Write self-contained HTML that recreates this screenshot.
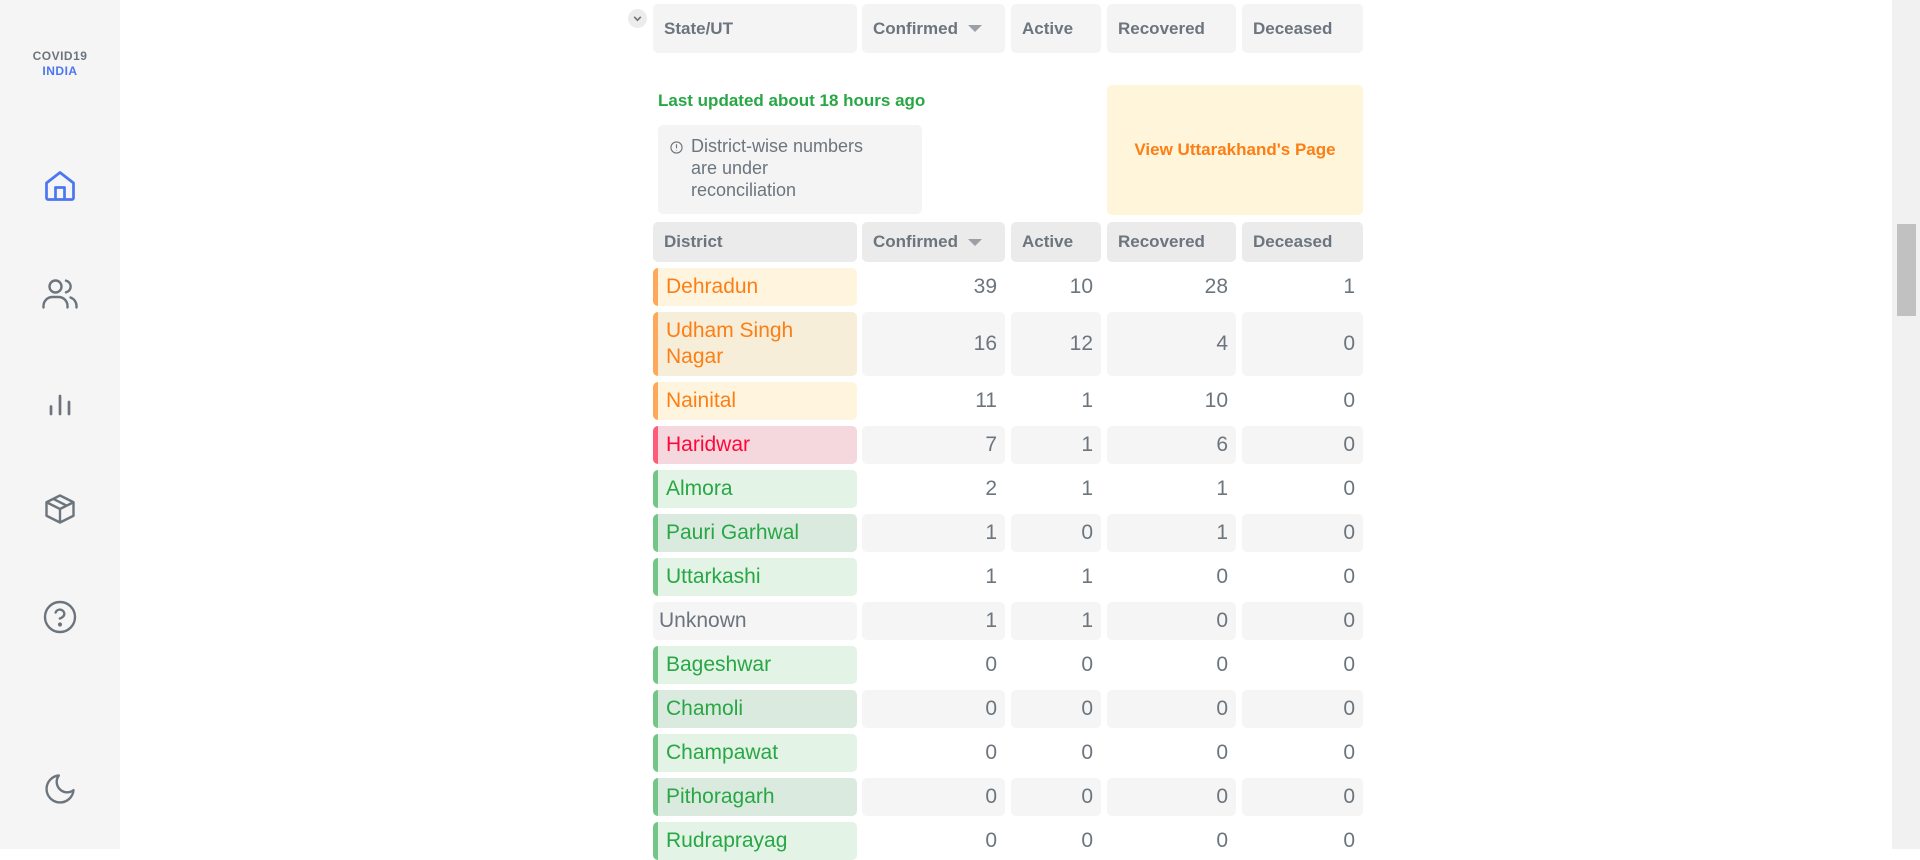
<!DOCTYPE html>
<html><head><meta charset="utf-8"><style>
*{box-sizing:border-box;margin:0;padding:0}
body{width:1920px;height:849px;overflow:hidden;background:#fff;font-family:"Liberation Sans",sans-serif;position:relative}
.side{position:absolute;left:0;top:0;width:120px;height:849px;background:#f5f5f5}
.logo{position:absolute;top:49px;width:120px;text-align:center;font-size:12px;font-weight:bold;letter-spacing:.5px;line-height:15px;color:#6c757d}
.logo span{color:#4c75f2}
.ic{position:absolute;left:42px;width:36px;height:36px}
.c{position:absolute;border-radius:5px;font-size:20px;color:#6c757d;display:flex;align-items:center}
.h{background:#f4f4f4;font-weight:bold;font-size:17px;padding-left:11px}
.dh{background:#ebebeb}
.n{justify-content:flex-end;padding-right:8px;font-size:21px}
.g{background:#f5f5f5}
.d{padding-left:13px;font-size:21px}
.d:before{content:"";position:absolute;left:0;top:0;bottom:0;width:5px;border-radius:5px 0 0 5px}
.o{color:#fd7e14;background:#fff5df}.o:before{background:#fda85a}
.o2{background:#f7eed9}
.r{color:#ff073a;background:#f5d7de}.r:before{background:#ff5c7c}
.gr{color:#28a745;background:#e3f3e6}.gr:before{background:#73c687}
.gr2{background:#dbeadf}
.tri{display:inline-block;width:0;height:0;border-left:7px solid transparent;border-right:7px solid transparent;border-top:7px solid #9aa0a6;margin-left:10px}
</style></head><body>
<div class="side">
<div class="logo">COVID19<br><span>INDIA</span></div>
<svg class="ic" style="top:168px" viewBox="0 0 24 24" fill="none" stroke="#4c75f2" stroke-width="1.8" stroke-linejoin="round"><path d="M3 10L12 3l9 7v10a1 1 0 0 1-1 1H4a1 1 0 0 1-1-1z"/><path d="M9 21v-8h6v8"/></svg>
<svg class="ic" style="top:276px" viewBox="0 0 24 24" fill="none" stroke="#6c757d" stroke-width="1.6" stroke-linecap="round"><circle cx="9" cy="7" r="4"/><path d="M1 21v-1a6 6 0 0 1 6-6h4a6 6 0 0 1 6 6v1"/><path d="M16 3.1a4 4 0 0 1 0 7.8M23 21v-1a6 6 0 0 0-4-5.7"/></svg>
<svg class="ic" style="top:384px" viewBox="0 0 24 24" fill="none" stroke="#6c757d" stroke-width="1.8" stroke-linecap="round"><path d="M6 20v-5M12 20V8M18 20v-8"/></svg>
<svg class="ic" style="top:491px" viewBox="0 0 24 24" fill="none" stroke="#6c757d" stroke-width="1.6" stroke-linejoin="round"><path d="M21 7.5L12 3 3 7.5v9L12 21l9-4.5z"/><path d="M3 7.5L12 12l9-4.5M12 12v9M7.5 5.2l9 4.6"/></svg>
<svg class="ic" style="top:599px" viewBox="0 0 24 24" fill="none" stroke="#6c757d" stroke-width="1.6" stroke-linecap="round"><circle cx="12" cy="12" r="10"/><path d="M9.1 9a3 3 0 0 1 5.8 1c0 2-3 3-3 3"/><circle cx="12" cy="17" r=".6" fill="#6c757d"/></svg>
<svg class="ic" style="top:771px" viewBox="0 0 24 24" fill="none" stroke="#6c757d" stroke-width="1.6" stroke-linejoin="round"><path d="M21 12.8A9 9 0 1 1 11.2 3 7 7 0 0 0 21 12.8z"/></svg>
</div>
<div style="position:absolute;left:628px;top:9px;width:19px;height:19px;border-radius:50%;background:#ececec"></div>
<svg style="position:absolute;left:632px;top:13px" width="11" height="11" viewBox="0 0 10 10" fill="none" stroke="#6c757d" stroke-width="1.5"><path d="M2 3.5l3 3 3-3"/></svg>

<div class="c h" style="left:653px;top:4px;width:204px;height:49px">State/UT</div>
<div class="c h" style="left:862px;top:4px;width:143px;height:49px">Confirmed<span class="tri"></span></div>
<div class="c h" style="left:1011px;top:4px;width:90px;height:49px">Active</div>
<div class="c h" style="left:1107px;top:4px;width:129px;height:49px">Recovered</div>
<div class="c h" style="left:1242px;top:4px;width:121px;height:49px">Deceased</div>

<div style="position:absolute;left:658px;top:91px;font-size:17px;font-weight:bold;color:#28a745">Last updated about 18 hours ago</div>
<div class="c" style="left:658px;top:125px;width:264px;height:89px;background:#f4f4f4;font-size:18px;line-height:22px;align-items:flex-start;padding:10px 0 0 33px">
<svg style="position:absolute;left:12px;top:16px" width="13" height="13" viewBox="0 0 14 14" fill="none" stroke="#6c757d" stroke-width="1.2"><circle cx="7" cy="7" r="6"/><path d="M7 3.5v4.5M7 9.8v.6"/></svg>District-wise numbers<br>are under<br>reconciliation</div>
<div class="c" style="left:1107px;top:85px;width:256px;height:130px;background:#fff5da;color:#fd7e14;font-size:17px;font-weight:bold;justify-content:center">View Uttarakhand's Page</div>

<div class="c h dh" style="left:653px;top:222px;width:204px;height:40px">District</div>
<div class="c h dh" style="left:862px;top:222px;width:143px;height:40px">Confirmed<span class="tri"></span></div>
<div class="c h dh" style="left:1011px;top:222px;width:90px;height:40px">Active</div>
<div class="c h dh" style="left:1107px;top:222px;width:129px;height:40px">Recovered</div>
<div class="c h dh" style="left:1242px;top:222px;width:121px;height:40px">Deceased</div>

<div id="rows"></div>
<script>
var R=[["Dehradun","o",39,10,28,1],["Udham Singh<br>Nagar","o o2",16,12,4,0],["Nainital","o",11,1,10,0],["Haridwar","r",7,1,6,0],["Almora","gr",2,1,1,0],["Pauri Garhwal","gr gr2",1,0,1,0],["Uttarkashi","gr",1,1,0,0],["Unknown","u",1,1,0,0],["Bageshwar","gr",0,0,0,0],["Chamoli","gr gr2",0,0,0,0],["Champawat","gr",0,0,0,0],["Pithoragarh","gr gr2",0,0,0,0],["Rudraprayag","gr",0,0,0,0]];
var y=268,h="",X=[[862,143],[1011,90],[1107,129],[1242,121]];
R.forEach(function(r,i){var H=i==1?64:38;var g=i%2==1;
var cls=r[1]=="u"?'c g" style="padding-left:6px;font-size:21px;':'c d '+r[1]+'" style="';
h+='<div class="'+cls+'left:653px;top:'+y+'px;width:204px;height:'+H+'px;line-height:26px">'+r[0]+'</div>';
for(var k=0;k<4;k++)h+='<div class="c n'+(g?' g':'')+'" style="left:'+X[k][0]+'px;top:'+y+'px;width:'+X[k][1]+'px;height:'+H+'px">'+r[k+2]+'</div>';
y+=H+6;});
document.getElementById("rows").innerHTML=h;
</script>
<div style="position:absolute;left:1892px;top:0;width:28px;height:849px;background:#f1f1f1"></div>
<div style="position:absolute;left:1897px;top:224px;width:19px;height:92px;background:#c1c1c1"></div>
</body></html>
